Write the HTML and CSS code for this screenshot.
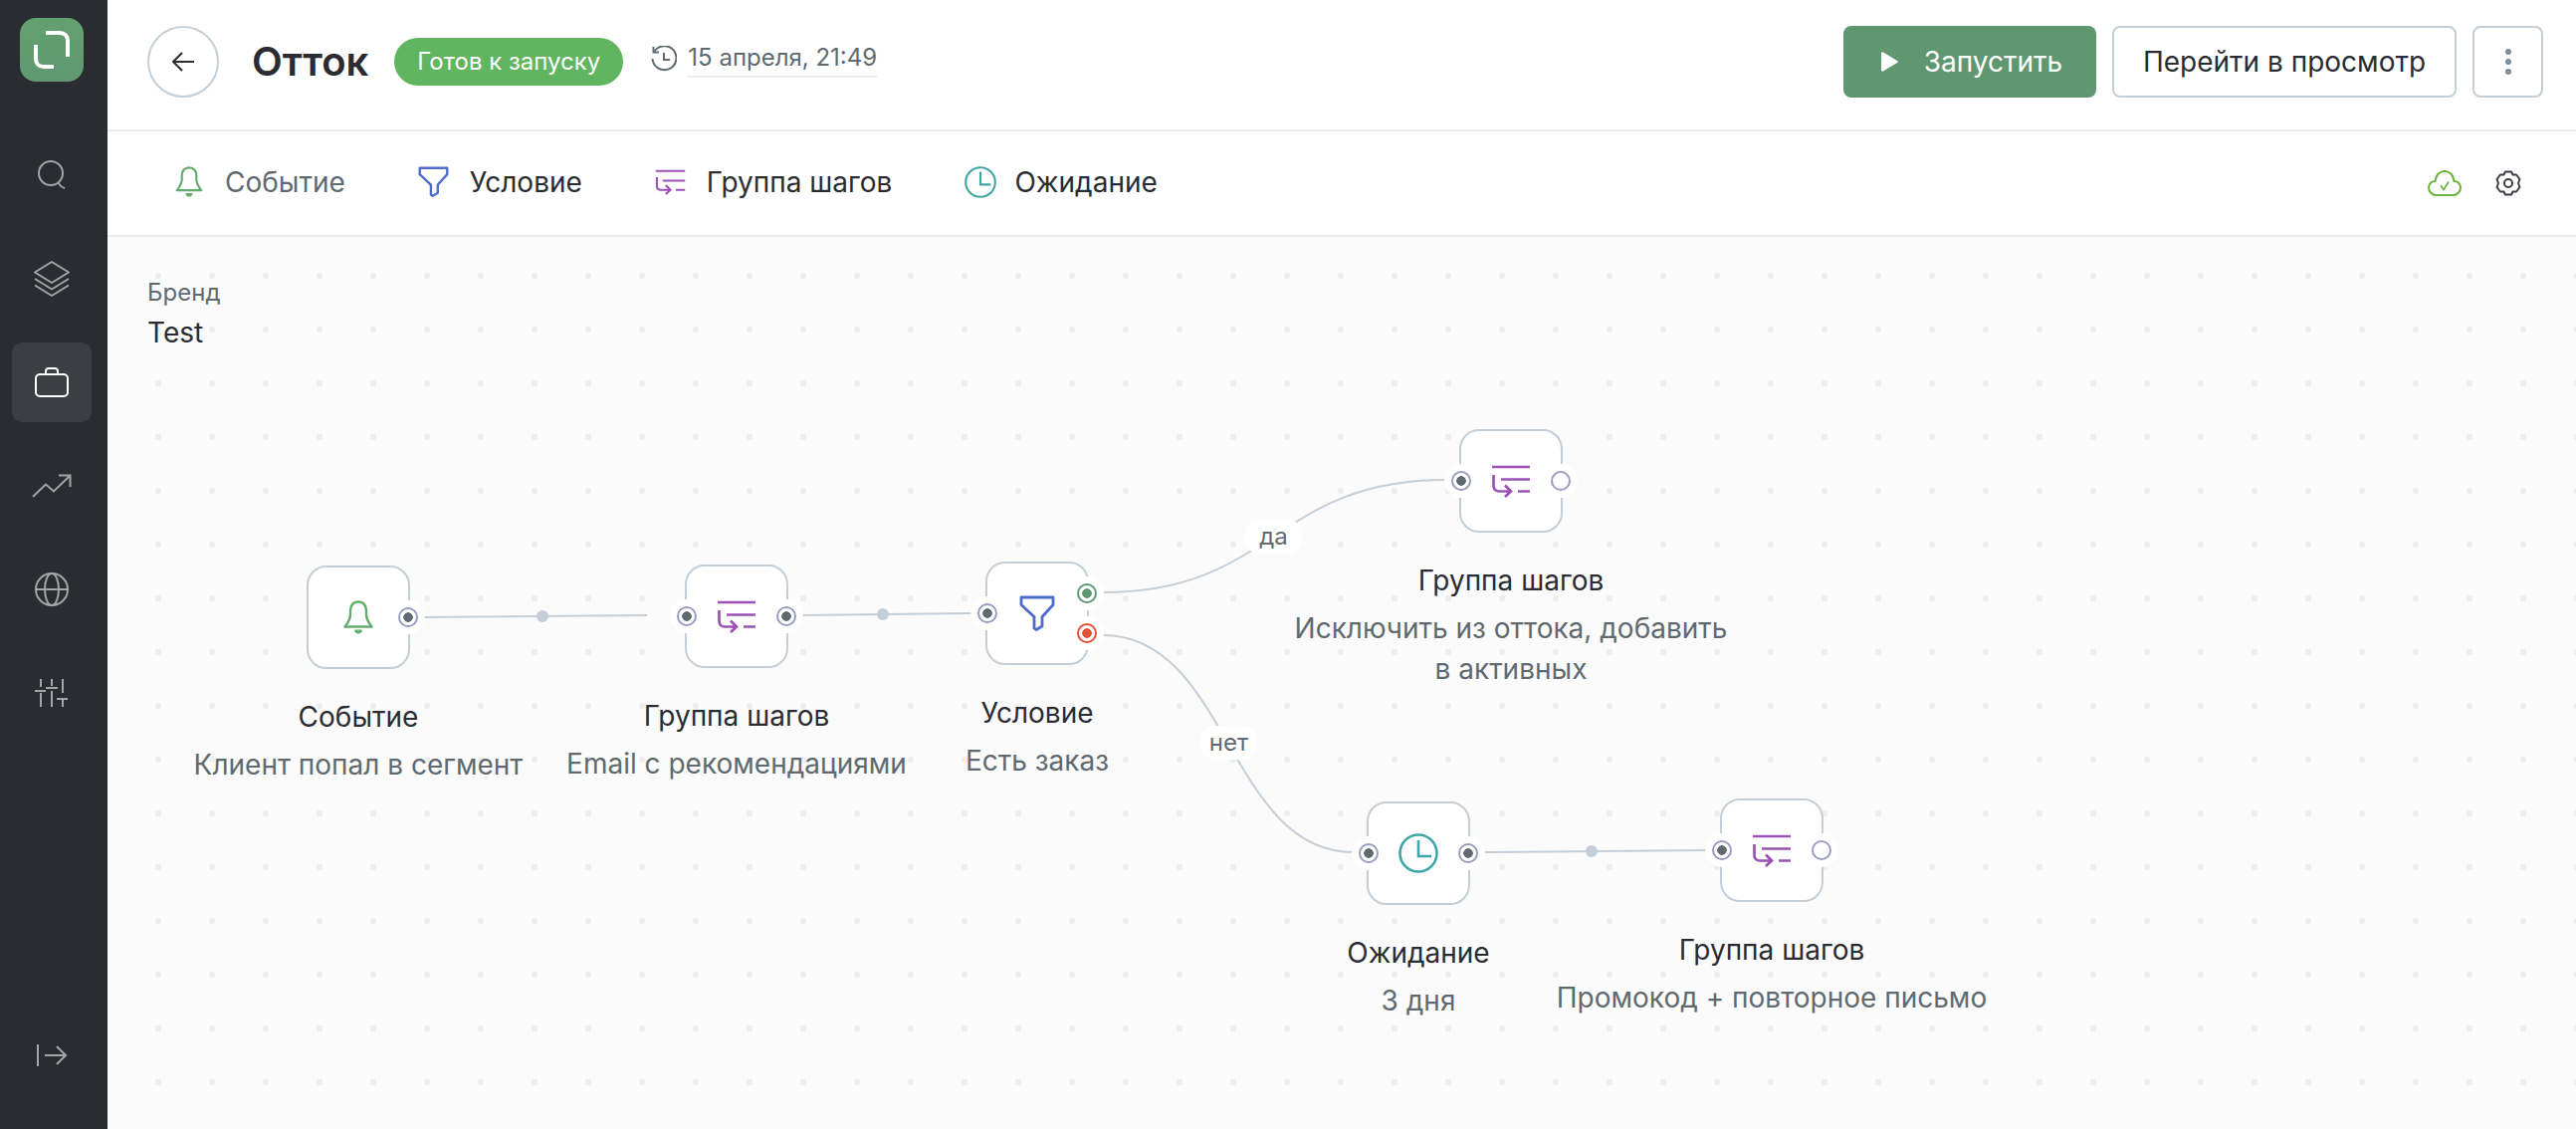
FILE: index.html
```html
<!DOCTYPE html>
<html lang="ru">
<head>
    <meta charset="UTF-8">
    <title>Отток</title>
    <link rel="stylesheet" href="styles.css">
</head>
<body>

<svg class="icon-defs" xmlns="http://www.w3.org/2000/svg">
    <symbol id="i-bell" viewBox="0 0 30 34">
        <path d="M15 1.5C9.5 1.500 7 5.500 7 10.500V14C7 20 4 23 1.500 26.500H28.500C26 23 23 20 23 14V10.500C23 5.500 20.500 1.500 15 1.500Z" fill="none" stroke="currentColor" stroke-width="2.400" stroke-linejoin="round"/>
        <path d="M11 29.500H19C19 32 17 33.500 15 33.500S11 32 11 29.500Z" fill="currentColor"/>
    </symbol>
    <symbol id="i-funnel" viewBox="0 0 36 36">
        <path d="M2 2H34V9.500L23 21.500V31L17 34.500L15 33V21.500L2 9.500Z" fill="none" stroke="currentColor" stroke-width="2.800" stroke-linejoin="round"/>
    </symbol>
    <symbol id="i-steps" viewBox="0 0 40 33">
        <path d="M1 2H39M10 14.500H39M27 26.500H39" fill="none" stroke="currentColor" stroke-width="2.700"/>
        <path d="M2.500 10V21C2.500 24.500 5 26.500 8 26.500H20M14 20.500L20 26.500L14 32" fill="none" stroke="currentColor" stroke-width="2.700"/>
    </symbol>
    <symbol id="i-clock" viewBox="0 0 40 40">
        <circle cx="20" cy="20" r="18.500" fill="none" stroke="currentColor" stroke-width="2.600"/>
        <path d="M20 7V23H33" fill="none" stroke="currentColor" stroke-width="2.600"/>
    </symbol>
</svg>

<aside class="sidebar">
    <div class="logo">
        <svg width="36" height="38" viewBox="0 0 36 38" fill="none" stroke="#fff" stroke-width="4">
            <path d="M2 14V28C2 33 5 36 10 36H20"/>
            <path d="M12 2H26C31 2 34 5 34 10V26"/>
        </svg>
    </div>
    <nav class="side-nav">
        <a class="side-item">
            <svg width="30" height="30" viewBox="0 0 30 30" fill="none" stroke="currentColor" stroke-width="2">
                <circle cx="14" cy="13" r="12"/>
                <path d="M22 23C23 25.500 25 27 28 28"/>
            </svg>
        </a>
        <a class="side-item">
            <svg width="36" height="36" viewBox="0 0 36 36" fill="none" stroke="currentColor" stroke-width="2" stroke-linejoin="round">
                <path d="M18 1L35 11.500L18 22L1 11.500Z"/>
                <path d="M1 18L18 28.500L35 18"/>
                <path d="M1 24.500L18 35L35 24.500"/>
            </svg>
        </a>
        <a class="side-item active">
            <svg width="34" height="30" viewBox="0 0 34 30" fill="none" stroke="currentColor" stroke-width="2">
                <rect x="1" y="7" width="32" height="22" rx="4"/>
                <path d="M11 7V4C11 2 12 1 14 1H20C22 1 23 2 23 4V7"/>
            </svg>
        </a>
        <a class="side-item">
            <svg width="40" height="24" viewBox="0 0 40 24" fill="none" stroke="currentColor" stroke-width="2">
                <path d="M1 23L14 10.500L22 17.500L38 2"/>
                <path d="M27 1.500H38.500V13"/>
            </svg>
        </a>
        <a class="side-item">
            <svg width="34" height="34" viewBox="0 0 34 34" fill="none" stroke="currentColor" stroke-width="2">
                <circle cx="17" cy="17" r="16"/>
                <ellipse cx="17" cy="17" rx="7" ry="16"/>
                <path d="M1 17H33"/>
            </svg>
        </a>
        <a class="side-item">
            <svg width="34" height="28" viewBox="0 0 34 28" fill="none" stroke="currentColor" stroke-width="2">
                <path d="M6 0V8M6 14V28M0 12H11M17 0V7M11 9H23M17 12V28M28 0V14M22 20H33M28 20V28"/>
            </svg>
        </a>
    </nav>
    <a class="side-item side-bottom">
        <svg width="32" height="24" viewBox="0 0 32 24" fill="none" stroke="currentColor" stroke-width="2">
            <path d="M2 1V23M9 12H30M21 3L30 12L21 21"/>
        </svg>
    </a>
</aside>

<main class="main">
    <header class="topbar">
        <button class="back-btn">
            <svg width="24" height="22" viewBox="0 0 24 22" fill="none" stroke="#2a2c31" stroke-width="2">
                <path d="M23 11H2M11 2L2 11L11 20"/>
            </svg>
        </button>
        <h1 class="title">Отток</h1>
        <span class="badge">Готов к запуску</span>
        <div class="history">
            <svg width="26" height="26" viewBox="0 0 26 26" fill="none" stroke="currentColor" stroke-width="2">
                <path d="M3.500 5.500A12 12 0 1 1 1.500 13"/>
                <path d="M2.500 1V6.500H8"/>
                <path d="M13 7V14H19"/>
            </svg>
            <span class="history-date">15 апреля, 21:49</span>
        </div>
        <div class="top-actions">
            <button class="btn btn-run">
                <svg width="18" height="20" viewBox="0 0 18 20"><path d="M1 1.500C1 .5 2 0 3 .6L17 9C18 9.600 18 10.400 17 11L3 19.400C2 20 1 19.500 1 18.500Z" fill="#fff"/></svg>
                Запустить
            </button>
            <button class="btn btn-outline">Перейти в просмотр</button>
            <button class="btn btn-more">
                <span class="more-dot"></span>
                <span class="more-dot"></span>
                <span class="more-dot"></span>
            </button>
        </div>
    </header>

    <div class="toolbar">
        <a class="tool tool-muted"><svg class="tool-icon c-green" width="28" height="31"><use href="#i-bell"/></svg>Событие</a>
        <a class="tool"><svg class="tool-icon c-blue" width="31" height="31"><use href="#i-funnel"/></svg>Условие</a>
        <a class="tool"><svg class="tool-icon c-purple" width="31" height="30"><use href="#i-steps"/></svg>Группа шагов</a>
        <a class="tool tool-wait"><svg class="tool-icon c-teal" width="32" height="32"><use href="#i-clock"/></svg>Ожидание</a>
        <div class="tool-right">
            <svg width="34" height="26" viewBox="0 0 34 26" fill="none" stroke="#6ab43e" stroke-width="2">
                <path d="M9 25C4 25 1 21.500 1 17.500C1 13.500 4 11 7.500 11C8.500 5 12 1 17 1C22 1 25.500 5 26.500 11C30 11 33 13.500 33 17.500C33 21.500 30 25 25 25Z"/>
                <path d="M13 15L16 19.500L21 11.500" stroke-width="1.600"/>
            </svg>
            <svg width="26" height="26" viewBox="0 0 26 26" fill="none" stroke="#3a3d42" stroke-width="2" stroke-linejoin="round">
                <path d="M10 1.500H16L17.500 4.500L21 4.500L24.500 9L23 13L24.500 17L21 21.500L17.500 21.500L16 24.500H10L8.500 21.500L5 21.500L1.500 17L3 13L1.500 9L5 4.500L8.500 4.500Z"/>
                <circle cx="13" cy="13" r="4"/>
            </svg>
        </div>
    </div>

    <section class="canvas">
        <div class="brand">
            <div class="brand-label">Бренд</div>
            <div class="brand-name">Test</div>
        </div>

        <svg class="edges" viewBox="108 238 2480 896" fill="none" stroke="#c3ced8" stroke-width="2">
            <path d="M426 620L650 618"/>
            <path d="M806 618L976 616"/>
            <path d="M1108 595C1280 595 1280 482 1452 482"/>
            <path d="M1108 638C1234 638 1234 856 1360 856"/>
            <path d="M1492 856L1714 854"/>
            <circle cx="545" cy="619" r="6" fill="#c3ced8" stroke="none"/>
            <circle cx="887" cy="617" r="6" fill="#c3ced8" stroke="none"/>
            <circle cx="1599" cy="855" r="6" fill="#c3ced8" stroke="none"/>
        </svg>

        <div class="edge-label label-yes">да</div>
        <div class="edge-label label-no">нет</div>

        <div class="node n-event">
            <div class="node-box">
                <svg class="c-green" width="30" height="34"><use href="#i-bell"/></svg>
                <span class="port port-out"></span>
            </div>
            <div class="node-title">Событие</div>
            <div class="node-desc">Клиент попал в сегмент</div>
        </div>

        <div class="node n-email">
            <div class="node-box">
                <svg class="c-purple" width="40" height="33"><use href="#i-steps"/></svg>
                <span class="port port-in"></span>
                <span class="port port-out"></span>
            </div>
            <div class="node-title">Группа шагов</div>
            <div class="node-desc">Email с рекомендациями</div>
        </div>

        <div class="node n-cond">
            <div class="node-box">
                <svg class="c-blue" width="36" height="36"><use href="#i-funnel"/></svg>
                <span class="port port-in"></span>
                <span class="port port-yes"></span>
                <span class="port port-no"></span>
            </div>
            <div class="node-title">Условие</div>
            <div class="node-desc">Есть заказ</div>
        </div>

        <div class="node n-active">
            <div class="node-box">
                <svg class="c-purple" width="40" height="33"><use href="#i-steps"/></svg>
                <span class="port port-in"></span>
                <span class="port port-out port-empty"></span>
            </div>
            <div class="node-title">Группа шагов</div>
            <div class="node-desc">Исключить из оттока, добавить<br>в активных</div>
        </div>

        <div class="node n-wait">
            <div class="node-box">
                <svg class="c-teal" width="40" height="40"><use href="#i-clock"/></svg>
                <span class="port port-in"></span>
                <span class="port port-out"></span>
            </div>
            <div class="node-title">Ожидание</div>
            <div class="node-desc">3 дня</div>
        </div>

        <div class="node n-promo">
            <div class="node-box">
                <svg class="c-purple" width="40" height="33"><use href="#i-steps"/></svg>
                <span class="port port-in"></span>
                <span class="port port-out port-empty"></span>
            </div>
            <div class="node-title">Группа шагов</div>
            <div class="node-desc">Промокод + повторное письмо</div>
        </div>
    </section>
</main>

</body>
</html>
```

FILE: styles.css
```css
* { box-sizing: border-box; }
html, body { height: 100%; }
body {
    margin: 0;
    display: flex;
    overflow: hidden;
    font-family: 'Inter', 'Liberation Sans', sans-serif;
    font-size: 28px;
    color: #2a2c31;
    background: #fff;
}
.icon-defs { display: none; }
svg { display: block; flex-shrink: 0; }

.c-green { color: #65ad6e; }
.c-blue { color: #4f6bcb; }
.c-purple { color: #9b51b5; }
.c-teal { color: #3fa6a8; }

/* sidebar */
.sidebar {
    width: 108px;
    flex-shrink: 0;
    background: #2a2c31;
    display: flex;
    flex-direction: column;
    align-items: center;
    padding: 18px 4px 34px 0;
}
.logo {
    width: 64px;
    height: 64px;
    border-radius: 16px;
    background: linear-gradient(#63a06f, #5f9870);
    display: flex;
    align-items: center;
    justify-content: center;
}
.side-nav {
    display: flex;
    flex-direction: column;
    gap: 24px;
    margin-top: 54px;
}
.side-item {
    width: 80px;
    height: 80px;
    border-radius: 10px;
    display: flex;
    align-items: center;
    justify-content: center;
    color: #a4a5a7;
}
.side-item.active { background: #3b3e43; color: #fff; }
.side-bottom { margin-top: auto; }

/* main */
.main {
    flex: 1;
    min-width: 0;
    display: flex;
    flex-direction: column;
}
.topbar {
    height: 132px;
    flex-shrink: 0;
    display: flex;
    align-items: center;
    padding: 0 33px 6px 40px;
    border-bottom: 2px solid #e9ebed;
}
.back-btn {
    width: 72px;
    height: 72px;
    border-radius: 50%;
    border: 2px solid #c3ced8;
    background: #fff;
    display: flex;
    align-items: center;
    justify-content: center;
    padding: 0;
}
.title {
    margin: 0 26px 0 33px;
    font-size: 40px;
    font-weight: 600;
    line-height: 48px;
}
.badge {
    height: 48px;
    line-height: 48px;
    padding: 0 23px;
    border-radius: 24px;
    background: #62b560;
    color: #fff;
    font-size: 24px;
}
.history {
    display: flex;
    align-items: center;
    gap: 11px;
    margin-left: 28px;
    margin-top: -7px;
    color: #5f6a70;
    font-size: 24px;
}
.history-date {
    line-height: 36px;
    border-bottom: 2px solid #e9ebed;
}
.top-actions {
    margin-left: auto;
    display: flex;
    gap: 16px;
}
.btn {
    height: 72px;
    border-radius: 8px;
    font: inherit;
    display: flex;
    align-items: center;
    justify-content: center;
    padding: 0;
}
.btn-run {
    width: 254px;
    gap: 26px;
    padding-left: 3px;
    background: #5f9870;
    color: #fff;
    border: 0;
}
.btn-outline {
    width: 346px;
    background: #fff;
    color: #2a2c31;
    border: 2px solid #c3ced8;
}
.btn-more {
    width: 71px;
    flex-direction: column;
    gap: 4px;
    background: #fff;
    border: 2px solid #c3ced8;
}
.more-dot {
    width: 6px;
    height: 6px;
    border-radius: 50%;
    background: #7f8a92;
}

.toolbar {
    height: 106px;
    flex-shrink: 0;
    display: flex;
    align-items: center;
    padding: 0 55px 3px 68px;
    gap: 73px;
    border-bottom: 2px solid #e9ebed;
}
.tool {
    display: flex;
    align-items: center;
    gap: 21px;
}
.tool-muted { color: #5f6a70; gap: 22px; }
.tool-wait { gap: 18px; }
.tool-right {
    margin-left: auto;
    margin-top: 3px;
    display: flex;
    align-items: center;
    gap: 34px;
}

/* canvas */
.canvas {
    flex: 1;
    position: relative;
    background-color: #fbfbfb;
    background-image: radial-gradient(circle, #eeeeee 3px, transparent 3.5px);
    background-size: 54px 54px;
    background-position: 24px 12px;
    overflow: hidden;
}
.brand {
    position: absolute;
    left: 40px;
    top: 36px;
}
.brand-label {
    font-size: 24px;
    line-height: 40px;
    color: #5f6a70;
}
.brand-name { line-height: 40px; }
.edges {
    position: absolute;
    left: 0;
    top: 0;
    width: 2480px;
    height: 896px;
}
.edge-label {
    position: absolute;
    min-width: 57px;
    height: 34px;
    line-height: 33px;
    padding: 0 7px;
    text-align: center;
    border-radius: 14px;
    background: #fff;
    color: #5f6a70;
    font-size: 24px;
}
.label-yes { left: 1143px; top: 284px; }
.label-no { left: 1098px; top: 491px; }

.node {
    position: absolute;
    width: 460px;
    text-align: center;
}
.n-event { left: 22px; top: 330px; }
.n-email { left: 402px; top: 329px; }
.n-cond { left: 704px; top: 326px; }
.n-active { left: 1180px; top: 193px; }
.n-wait { left: 1087px; top: 567px; }
.n-promo { left: 1442px; top: 564px; }

.node-box {
    position: relative;
    width: 104px;
    height: 104px;
    margin: 0 auto;
    background: #fff;
    border: 2px solid #c3ced8;
    border-radius: 20px;
    display: flex;
    align-items: center;
    justify-content: center;
}
.node-title {
    margin-top: 28px;
    line-height: 40px;
}
.node-desc {
    margin-top: 8px;
    line-height: 41px;
    color: #5f6a70;
}

.port {
    position: absolute;
    top: 50px;
    width: 20px;
    height: 20px;
    margin: -10px 0 0 -10px;
    border-radius: 50%;
    border: 2px solid #9a9dc0;
    background: radial-gradient(circle, #5f6a70 4.5px, #fff 5px);
    box-shadow: 0 0 0 7px #fff;
}
.port-in { left: 0; }
.port-out { left: 100%; }
.port-empty { background: #fff; }
.port-yes {
    left: 100%;
    top: 30px;
    border-color: #5f9870;
    background: radial-gradient(circle, #5f9870 4.5px, #fff 5px);
}
.port-no {
    left: 100%;
    top: 70px;
    border-color: #e24f37;
    background: radial-gradient(circle, #e24f37 4.5px, #fff 5px);
}
```
